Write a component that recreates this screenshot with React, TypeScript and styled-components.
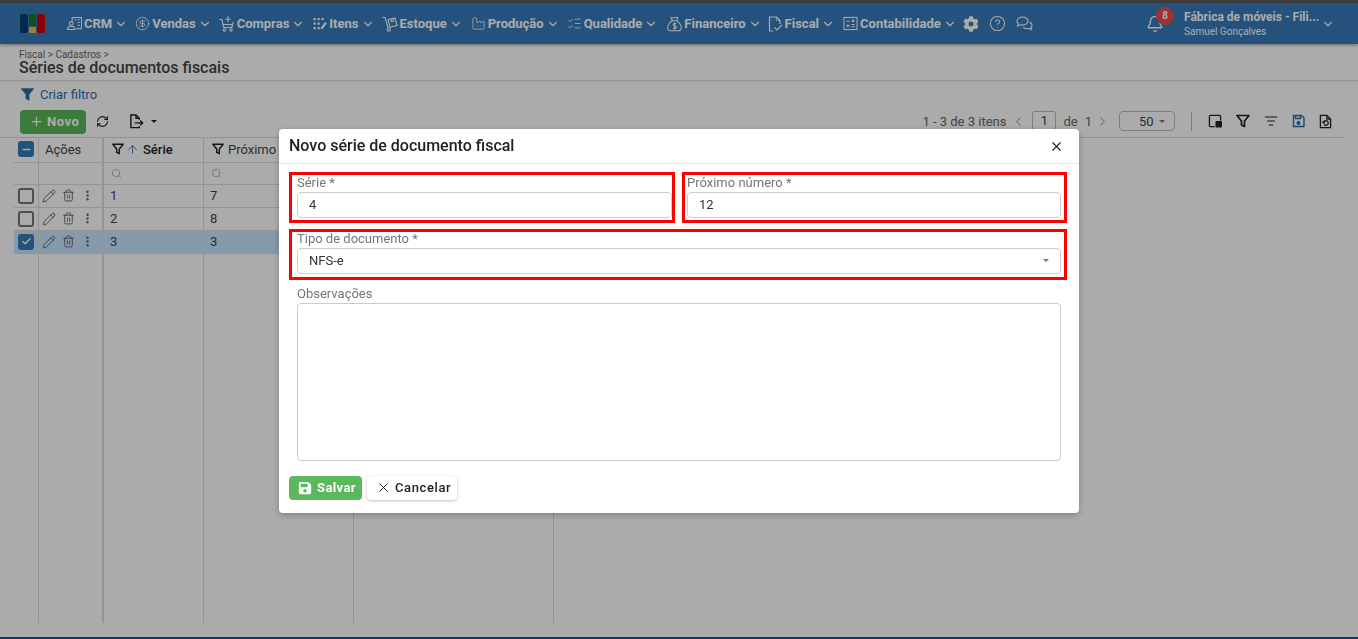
import React from 'react';
import styled, { createGlobalStyle } from 'styled-components';
import {
  ArrowUp,
  Bell,
  Check,
  ChevronDown,
  ChevronLeft,
  ChevronRight,
  CircleDollarSign,
  CircleHelp,
  EllipsisVertical,
  Factory,
  ListChecks,
  ListFilter,
  Minus,
  Pencil,
  Plus,
  RefreshCw,
  Search,
  Trash2,
  X,
} from 'lucide-react';
import { FaCog, FaSave } from 'react-icons/fa';

const GlobalStyle = createGlobalStyle`
  html, body { margin: 0; padding: 0; height: 100%; overflow: hidden; }
  body { font-family: Roboto, "Liberation Sans", sans-serif; background: #fff; }
  * { box-sizing: border-box; }
`;

const CrmIcon = () => (
  <svg width="15" height="15" viewBox="0 0 16 16" fill="none" stroke="currentColor" strokeWidth="1.100">
    <path d="M5.500 5V1.500h10v12H9.500" />
    <path d="M8 4h1.800M11.500 4h2M11.500 7h2M11.500 10h2" />
    <circle cx="4.500" cy="8" r="2" />
    <path d="M.5 14.500c0-2.300 1.600-3.500 4-3.500s4 1.200 4 3.500z" />
  </svg>
);

const CartIcon = () => (
  <svg width="16" height="16" viewBox="0 0 16 16" fill="none" stroke="currentColor" strokeWidth="1.100">
    <path d="M.5 3.500h2.300l2 8h8l1.500-5.500" />
    <path d="M3.600 8.500h10" />
    <path d="M9 .5v5.500M6.300 3.300h5.400" />
    <circle cx="5.500" cy="14" r="1.200" />
    <circle cx="12" cy="14" r="1.200" />
  </svg>
);

const ItensIcon = () => (
  <svg width="14" height="14" viewBox="0 0 14 14" fill="currentColor">
    <rect x="0.500" y="1" width="2.200" height="2.200" />
    <rect x="4.500" y="1" width="2.200" height="2.200" />
    <rect x="8.500" y="1" width="2.200" height="2.200" />
    <rect x="0.500" y="5.500" width="2.200" height="2.200" />
    <rect x="4.500" y="5.500" width="2.200" height="2.200" />
    <rect x="0.500" y="10" width="2.200" height="2.200" />
    <rect x="4.500" y="10" width="2.200" height="2.200" />
    <path d="M8 10.500 12 5l1.800 1.300-4 5.500-2 .5z" />
  </svg>
);

const EstoqueIcon = () => (
  <svg width="16" height="16" viewBox="0 0 16 16" fill="none" stroke="currentColor" strokeWidth="1.100">
    <path d="M.5 1.500h2.500l3 10" />
    <circle cx="6.800" cy="13.500" r="1.600" />
    <path d="M6 3.500l7-1.500 2 7.500-7 1.700z" />
    <path d="M8.800 2.900l.7 2.800 2-.5-.7-2.800" />
  </svg>
);

const BagIcon = () => (
  <svg width="15" height="16" viewBox="0 0 16 16" fill="none" stroke="currentColor" strokeWidth="1.100">
    <path d="M5.500 4.500 4.500 1.200c1 .6 2 .6 3.500 0s2.500-.4 3.500 0l-1 3.300z" />
    <path d="M5.500 4.500C3 6.500.8 9.500.8 12c0 2.200 1.500 3.300 3.700 3.300h7c2.200 0 3.700-1.100 3.700-3.300 0-2.500-2.200-5.500-4.700-7.500" />
    <path d="M10 8c-.5-.8-3.500-1-3.500.6S10 9.800 10 11.400 7 13 6.300 12M8.200 6.500v7.500" />
  </svg>
);

const FiscalIcon = () => (
  <svg width="15" height="16" viewBox="0 0 15 16" fill="none" stroke="currentColor" strokeWidth="1.200">
    <path d="M5.500 15H1.500V1h7l3.500 3.500v3.500" />
    <path d="M8.500 1v3.500H12" strokeDasharray="1.500 1" />
    <path d="M6.500 11.500l2.500 2.500 5-5" />
  </svg>
);

const ContabIcon = () => (
  <svg width="15" height="15" viewBox="0 0 16 16" fill="none" stroke="currentColor" strokeWidth="1.100">
    <rect x="1" y="1.500" width="14" height="13" />
    <path d="M3.500 5.500h3.500M9.500 3.800l2.500 2.400M12 3.800 9.500 6.200M9 9h3.500M9 11.500h3.500M3.500 10.500h3.500M5.250 8.800v3.400" />
  </svg>
);

const ChatIcon = () => (
  <svg width="17" height="15" viewBox="0 0 17 15" fill="none" stroke="currentColor" strokeWidth="1.100">
    <path d="M6.500 1C3.500 1 1 2.800 1 5c0 1 .5 1.900 1.300 2.600L1.500 10l2.800-1.200c.7.200 1.400.3 2.200.3 3 0 5.500-1.800 5.500-4S9.500 1 6.500 1z" />
    <path d="M13.500 6c1.500.7 2.500 1.800 2.500 3.200 0 .9-.4 1.700-1.100 2.300l.6 2-2.400-1c-.7.200-1.300.3-2 .3-1.700 0-3.200-.6-4-1.600" />
  </svg>
);

const LayoutIcon = () => (
  <svg width="14" height="14" viewBox="0 0 15 15" fill="none" stroke="#222" strokeWidth="1.400">
    <path d="M7 13.500H2.500a1 1 0 0 1-1-1v-10a1 1 0 0 1 1-1h10a1 1 0 0 1 1 1V7" />
    <rect x="8" y="7.500" width="7" height="7" rx="1" fill="#222" stroke="none" />
  </svg>
);

const ExportIcon = () => (
  <svg width="15" height="15" viewBox="0 0 16 16" fill="none" stroke="#222" strokeWidth="1.500">
    <path d="M11 6V4.500L7.500 1H2v13.500h9V13" />
    <path d="M7.500 1v3.500H11M6 9.500h8.500M12 7l2.500 2.500L12 12" />
  </svg>
);

const FilterGlyph = ({ size = 13, solid = false, color = '#222' }: { size?: number; solid?: boolean; color?: string }) => (
  <svg width={size} height={size} viewBox="0 0 14 14" fill={solid ? color : 'none'} stroke={color} strokeWidth={solid ? 0.5 : 1.700}>
    <path d="M1 1.500h12L8.500 7v5.500L5.500 11V7z" strokeLinejoin="round" />
  </svg>
);

const SaveOutlineIcon = () => (
  <svg width="13" height="14" viewBox="0 0 13 14" fill="none" stroke="#2a6ea8" strokeWidth="1.400">
    <path d="M1.500 1.500h8l2.500 2.500v8.500h-10.500z" />
    <path d="M3.500 1.500v3h5v-3" />
    <circle cx="6.500" cy="9" r="1.300" fill="#2a6ea8" />
  </svg>
);

const RestoreFileIcon = () => (
  <svg width="13" height="15" viewBox="0 0 14 15" fill="none" stroke="#222" strokeWidth="1.400">
    <path d="M8.500 1H1.500v13h11V5z" />
    <path d="M8.500 1v4h4" />
    <path d="M5 8.500a2.500 2.500 0 1 1 .6 2.300M4.500 7v2h2" />
  </svg>
);

type NavEntry = { label: string; icon: React.ReactNode; gap: number };

const NAV_ITEMS: NavEntry[] = [
  { label: 'CRM', icon: <CrmIcon />, gap: 7 },
  { label: 'Vendas', icon: <CircleDollarSign size={15} strokeWidth={1.3} />, gap: 7 },
  { label: 'Compras', icon: <CartIcon />, gap: 8 },
  { label: 'Itens', icon: <ItensIcon />, gap: 7 },
  { label: 'Estoque', icon: <EstoqueIcon />, gap: 8 },
  { label: 'Produção', icon: <Factory size={15} strokeWidth={1.3} />, gap: 7 },
  { label: 'Qualidade', icon: <ListChecks size={15} strokeWidth={1.3} />, gap: 9 },
  { label: 'Financeiro', icon: <BagIcon />, gap: 6 },
  { label: 'Fiscal', icon: <FiscalIcon />, gap: 8 },
  { label: 'Contabilidade', icon: <ContabIcon />, gap: 4 },
];

const ROWS = [
  { serie: '1', proximo: '7', selected: false },
  { serie: '2', proximo: '8', selected: false },
  { serie: '3', proximo: '3', selected: true },
];

const App = () => {
  return (
    <Page>
      <GlobalStyle />
      <TopStrip />
      <Header>
        <Logo>
          <LogoBar $color="#073d78" />
          <LogoMiddle>
            <LogoCell $color="#177a1e" $grow={2} />
            <LogoCell $color="#f5c42c" $grow={1} />
          </LogoMiddle>
          <LogoBar $color="#d00000" />
        </Logo>
        <Nav>
          {NAV_ITEMS.map((item) => (
            <NavItem key={item.label} $gap={item.gap}>
              {item.icon}
              <NavLabel>{item.label}</NavLabel>
              <NavChevron>
                <ChevronDown size={14} strokeWidth={2} />
              </NavChevron>
            </NavItem>
          ))}
          <NavTools>
            <FaCog size={16} />
            <CircleHelp size={17} strokeWidth={1.5} />
            <ChatIcon />
          </NavTools>
        </Nav>
        <BellWrap>
          <Bell size={18} strokeWidth={1.8} />
          <Badge>8</Badge>
        </BellWrap>
        <UserBlock>
          <UserCompany>Fábrica de móveis - Fili...</UserCompany>
          <UserName>Samuel Gonçalves</UserName>
        </UserBlock>
        <UserChevron>
          <ChevronDown size={14} strokeWidth={2} />
        </UserChevron>
      </Header>

      <TitleBar>
        <Breadcrumb>Fiscal &gt; Cadastros &gt;</Breadcrumb>
        <Title>Séries de documentos fiscais</Title>
      </TitleBar>

      <FilterRow>
        <FilterGlyph size={15} solid color="#2a6ea8" />
        <FilterLink>Criar filtro</FilterLink>
      </FilterRow>

      <Toolbar>
        <NewButton>
          <Plus size={15} strokeWidth={2} />
          Novo
        </NewButton>
        <ToolIcon>
          <RefreshCw size={13} strokeWidth={2} color="#222" />
        </ToolIcon>
        <ExportGroup>
          <ExportIcon />
          <Caret />
        </ExportGroup>
        <Pager>
          <PagerText>1 - 3 de 3 itens</PagerText>
          <PagerArrows>
            <ChevronLeft size={15} strokeWidth={1.500} color="#8a8a8a" />
          </PagerArrows>
          <PageBox>1</PageBox>
          <PagerText>de</PagerText>
          <PageLink>1</PageLink>
          <PagerArrows>
            <ChevronRight size={15} strokeWidth={1.500} color="#8a8a8a" />
          </PagerArrows>
          <SizeBox>
            50
            <Caret $small />
          </SizeBox>
          <PagerDivider />
          <PagerIcons>
            <LayoutIcon />
            <FilterGlyph size={14} />
            <ListFilter size={14} strokeWidth={1.800} color="#222" />
            <SaveOutlineIcon />
            <RestoreFileIcon />
          </PagerIcons>
        </Pager>
      </Toolbar>

      <TableArea>
        <Column $width={25}>
          <HeadCell $center>
            <CheckBox $checked>
              <Minus size={11} strokeWidth={3} />
            </CheckBox>
          </HeadCell>
          <FilterCell />
          {ROWS.map((row) => (
            <RowCell key={row.serie} $selected={row.selected} $center>
              <CheckBox $checked={row.selected}>
                {row.selected && <Check size={11} strokeWidth={3} />}
              </CheckBox>
            </RowCell>
          ))}
        </Column>
        <Column $width={65} $thick>
          <HeadCell>Ações</HeadCell>
          <FilterCell />
          {ROWS.map((row) => (
            <RowCell key={row.serie} $selected={row.selected}>
              <RowActions>
                <Pencil size={14} strokeWidth={1.700} />
                <Trash2 size={13} strokeWidth={1.700} />
                <EllipsisVertical size={13} strokeWidth={2.600} />
              </RowActions>
            </RowCell>
          ))}
        </Column>
        <Column $width={100}>
          <HeadCell $wideGap>
            <FilterGlyph size={12} />
            <SortArrow>
              <ArrowUp size={13} strokeWidth={1.600} color="#2a6ea8" />
            </SortArrow>
            <HeadStrong>Série</HeadStrong>
          </HeadCell>
          <FilterCell>
            <Search size={11} strokeWidth={1.500} color="#999" />
          </FilterCell>
          {ROWS.map((row) => (
            <RowCell key={row.serie} $selected={row.selected}>
              {row.serie}
            </RowCell>
          ))}
        </Column>
        <Column $width={150}>
          <HeadCell $wideGap>
            <FilterGlyph size={12} />
            Próximo
          </HeadCell>
          <FilterCell>
            <Search size={11} strokeWidth={1.500} color="#999" />
          </FilterCell>
          {ROWS.map((row) => (
            <RowCell key={row.serie} $selected={row.selected}>
              {row.proximo}
            </RowCell>
          ))}
        </Column>
        <Column $width={200} />
      </TableArea>
      <BottomStrip />

      <Overlay>
        <Modal>
          <ModalHeader>
            <ModalTitle>Novo série de documento fiscal</ModalTitle>
            <CloseButton>
              <X size={15} strokeWidth={1.800} />
            </CloseButton>
          </ModalHeader>
          <ModalBody>
            <FormGrid>
              <FieldBox $padLeft={5} $padRight={0}>
                <FieldLabel>Série *</FieldLabel>
                <TextBox>4</TextBox>
              </FieldBox>
              <FieldBox $padLeft={2.500} $padRight={3}>
                <FieldLabel>Próximo número *</FieldLabel>
                <TextBox>12</TextBox>
              </FieldBox>
              <FieldBox $wide $padLeft={5} $padRight={3}>
                <FieldLabel>Tipo de documento *</FieldLabel>
                <TextBox>
                  NFS-e
                  <Caret $small />
                </TextBox>
              </FieldBox>
            </FormGrid>
            <NotesField>
              <FieldLabel>Observações</FieldLabel>
              <NotesBox />
            </NotesField>
            <ModalActions>
              <SaveButton>
                <FaSave size={14} />
                Salvar
              </SaveButton>
              <CancelButton>
                <X size={15} strokeWidth={1.600} />
                Cancelar
              </CancelButton>
            </ModalActions>
          </ModalBody>
        </Modal>
      </Overlay>
    </Page>
  );
};

const Page = styled.div`
  display: flex;
  flex-direction: column;
  height: 100vh;
  background: #fff;
  color: #333;
`;

const TopStrip = styled.div`
  height: 3px;
  background: #5c5c5c;
`;

const Header = styled.header`
  display: flex;
  align-items: center;
  height: 41px;
  padding-left: 20px;
  background: #367bbb;
  color: #fff;
  box-shadow: 0 1px 3px rgba(0, 0, 0, 0.4);
`;

const Logo = styled.div`
  display: flex;
  gap: 1px;
  width: 25px;
  height: 19px;
`;

const LogoBar = styled.div<{ $color: string }>`
  flex: 1;
  background: ${(p) => p.$color};
  border-radius: 2px;
`;

const LogoMiddle = styled.div`
  flex: 1;
  display: flex;
  flex-direction: column;
  gap: 1px;
`;

const LogoCell = styled.div<{ $color: string; $grow: number }>`
  flex: ${(p) => p.$grow};
  background: ${(p) => p.$color};
`;

const Nav = styled.nav`
  display: flex;
  align-items: center;
  margin-left: 22px;
`;

const NavItem = styled.div<{ $gap: number }>`
  display: flex;
  align-items: center;
  gap: 2px;
  margin-right: ${(p) => p.$gap}px;
  white-space: nowrap;
`;

const NavLabel = styled.span`
  font-size: 13px;
  font-weight: 700;
`;

const NavChevron = styled.span`
  display: flex;
`;

const NavTools = styled.div`
  display: flex;
  align-items: center;
  gap: 10px;
  margin-left: 2px;
`;

const BellWrap = styled.div`
  position: relative;
  display: flex;
  margin-left: auto;
  margin-right: 20px;
`;

const Badge = styled.span`
  position: absolute;
  top: -8px;
  left: 10px;
  width: 18px;
  height: 18px;
  border-radius: 50%;
  background: #f04b4b;
  font-size: 10px;
  font-weight: 700;
  line-height: 18px;
  text-align: center;
`;

const UserBlock = styled.div`
  display: flex;
  flex-direction: column;
  gap: 2px;
  width: 137px;
`;

const UserCompany = styled.span`
  font-size: 12px;
  font-weight: 700;
  white-space: nowrap;
`;

const UserName = styled.span`
  font-size: 10px;
`;

const UserChevron = styled.div`
  display: flex;
  margin-right: 23px;
`;

const TitleBar = styled.div`
  height: 37px;
  padding: 5px 0 0 19px;
  border-bottom: 1px solid #ddd;
  box-shadow: 0 1px 2px rgba(0, 0, 0, 0.08);
`;

const Breadcrumb = styled.div`
  font-size: 10px;
  line-height: 11px;
  color: #666;
`;

const Title = styled.h1`
  margin: 0;
  font-size: 16px;
  font-weight: 500;
  line-height: 15px;
  color: #444;
`;

const FilterRow = styled.div`
  display: flex;
  align-items: center;
  gap: 5px;
  height: 27px;
  padding-left: 20px;
`;

const FilterLink = styled.span`
  font-size: 13px;
  color: #2a6ea8;
`;

const Toolbar = styled.div`
  display: flex;
  align-items: center;
  height: 30px;
  margin-right: 14px;
  padding-left: 20px;
  border-bottom: 1px solid #ddd;
`;

const NewButton = styled.div`
  display: flex;
  align-items: center;
  gap: 3px;
  width: 66px;
  height: 24px;
  margin-bottom: 2px;
  padding-left: 9px;
  border-radius: 4px;
  background: #5cb85c;
  color: #fff;
  font-size: 13px;
  font-weight: 700;
  letter-spacing: 0.5px;
`;

const ToolIcon = styled.div`
  display: flex;
  margin-left: 10px;
  margin-bottom: 2px;
`;

const ExportGroup = styled.div`
  display: flex;
  align-items: center;
  gap: 7px;
  margin-left: 20px;
  margin-bottom: 2px;
`;

const Caret = styled.span<{ $small?: boolean }>`
  display: inline-block;
  margin-left: ${(p) => (p.$small ? 'auto' : '0')};
  border-left: 3.5px solid transparent;
  border-right: 3.5px solid transparent;
  border-top: ${(p) => (p.$small ? 3 : 3.5)}px solid ${(p) => (p.$small ? '#777' : '#222')};
`;

const Pager = styled.div`
  display: flex;
  align-items: center;
  margin-left: auto;
  margin-bottom: 3px;
  padding-right: 12px;
`;

const PagerText = styled.span`
  font-size: 13px;
  color: #666;
`;

const PagerArrows = styled.div`
  display: flex;
  margin: 0 5px;
`;

const PageBox = styled.div`
  width: 24px;
  height: 20px;
  margin: 0 7px 0 1px;
  border: 1px solid #bbb;
  border-radius: 3px;
  font-size: 13px;
  line-height: 18px;
  text-align: center;
  color: #444;
`;

const PageLink = styled.span`
  margin: 0 -2px 0 7px;
  font-size: 13px;
  color: #2a6ea8;
`;

const SizeBox = styled.div`
  display: flex;
  align-items: center;
  width: 56px;
  height: 20px;
  margin-left: 4px;
  padding: 0 9px 0 19px;
  border: 1px solid #bbb;
  border-radius: 4px;
  font-size: 13px;
  color: #444;
`;

const PagerDivider = styled.div`
  width: 1px;
  height: 19px;
  margin: 0 16px;
  background: #bbb;
`;

const PagerIcons = styled.div`
  display: flex;
  align-items: center;
  gap: 14px;
`;

const TableArea = styled.div`
  flex: 1;
  display: flex;
  min-height: 0;
  margin: 0 0 14px 14px;
`;

const Column = styled.div<{ $width: number; $thick?: boolean }>`
  display: flex;
  flex-direction: column;
  width: ${(p) => p.$width}px;
  border-right: ${(p) => (p.$thick ? 2 : 1)}px solid #ddd;
  font-size: 13px;
  color: #444;
`;

const HeadCell = styled.div<{ $center?: boolean; $wideGap?: boolean }>`
  display: flex;
  align-items: center;
  justify-content: ${(p) => (p.$center ? 'center' : 'flex-start')};
  gap: 4px;
  height: 25px;
  padding-left: ${(p) => (p.$center ? 0 : p.$wideGap ? 8 : 6)}px;
  padding-bottom: 2px;
  border-bottom: 1px solid #ddd;
  white-space: nowrap;
`;

const SortArrow = styled.span`
  display: flex;
  margin-left: -2px;
`;

const HeadStrong = styled.strong`
  font-weight: 500;
  color: #222;
`;

const FilterCell = styled.div`
  display: flex;
  align-items: center;
  height: 22px;
  padding-left: 7px;
  border-bottom: 1px solid #ddd;
`;

const RowCell = styled.div<{ $selected?: boolean; $center?: boolean }>`
  display: flex;
  align-items: center;
  justify-content: ${(p) => (p.$center ? 'center' : 'flex-start')};
  height: 23px;
  padding-left: ${(p) => (p.$center ? 0 : 6)}px;
  padding-bottom: 1px;
  border-bottom: 1px solid #ddd;
  background: ${(p) => (p.$selected ? '#c8e6ff' : 'transparent')};
`;

const CheckBox = styled.div<{ $checked?: boolean }>`
  display: flex;
  align-items: center;
  justify-content: center;
  width: 16px;
  height: 16px;
  border: 2px solid ${(p) => (p.$checked ? '#367bbb' : '#777')};
  border-radius: 3px;
  background: ${(p) => (p.$checked ? '#367bbb' : '#fff')};
  color: #fff;
`;

const RowActions = styled.div`
  display: flex;
  align-items: center;
  gap: 6px;
  margin-left: -3px;
  color: #666;
`;

const BottomStrip = styled.div`
  height: 2px;
  background: #2a4a8a;
`;

const Overlay = styled.div`
  position: fixed;
  inset: 0;
  background: rgba(0, 0, 0, 0.33);
`;

const Modal = styled.div`
  position: absolute;
  top: 129px;
  left: 279px;
  width: 800px;
  height: 384px;
  border-radius: 4px;
  background: #fff;
  color: #222;
  box-shadow: 0 2px 6px rgba(0, 0, 0, 0.25);
`;

const ModalHeader = styled.div`
  display: flex;
  align-items: center;
  justify-content: space-between;
  height: 35px;
  padding: 0 15px 2px 10px;
  border-bottom: 1px solid #e3e3e3;
`;

const ModalTitle = styled.h2`
  margin: 0;
  font-size: 16px;
  font-weight: 500;
`;

const CloseButton = styled.div`
  display: flex;
  margin-top: 2px;
  color: #222;
`;

const ModalBody = styled.div`
  padding: 8px 12px 0 10px;
`;

const FormGrid = styled.div`
  display: grid;
  grid-template-columns: 1fr 1fr;
  gap: 6.5px 7px;
`;

const FieldLabel = styled.label`
  height: 17px;
  font-size: 13px;
  line-height: 15px;
  color: #757575;
`;

const FieldBox = styled.div<{ $wide?: boolean; $padLeft: number; $padRight: number }>`
  display: flex;
  flex-direction: column;
  grid-column: ${(p) => (p.$wide ? '1 / span 2' : 'auto')};
  height: 50.5px;
  padding: 0 ${(p) => p.$padRight}px 0 ${(p) => p.$padLeft}px;
  border: 3px solid #f00;

  ${FieldLabel} {
    margin-top: ${(p) => (p.$wide ? -1 : 0)}px;
  }
`;

const TextBox = styled.div`
  display: flex;
  align-items: center;
  height: 26px;
  padding: 0 11px 2px;
  border: 1px solid #ccc;
  border-radius: 4px;
  font-size: 13px;
  color: #333;
`;

const NotesField = styled.div`
  display: flex;
  flex-direction: column;
  margin: 6px 6px 0 8px;
`;

const NotesBox = styled.div`
  height: 158px;
  border: 1px solid #ccc;
  border-radius: 4px;
`;

const ModalActions = styled.div`
  display: flex;
  gap: 5px;
  margin-top: 15px;
`;

const SaveButton = styled.div`
  display: flex;
  align-items: center;
  gap: 5px;
  height: 24px;
  padding: 0 6px 0 9px;
  border-radius: 4px;
  background: #5cb85c;
  color: #fff;
  font-size: 13px;
  font-weight: 700;
  letter-spacing: 0.4px;
`;

const CancelButton = styled.div`
  display: flex;
  align-items: center;
  gap: 4px;
  height: 24px;
  padding: 0 6px 0 9px;
  border-radius: 4px;
  background: #fff;
  color: #222;
  font-size: 13px;
  font-weight: 500;
  letter-spacing: 0.6px;
  box-shadow: 0 1px 3px rgba(0, 0, 0, 0.25);
`;

export default App;
